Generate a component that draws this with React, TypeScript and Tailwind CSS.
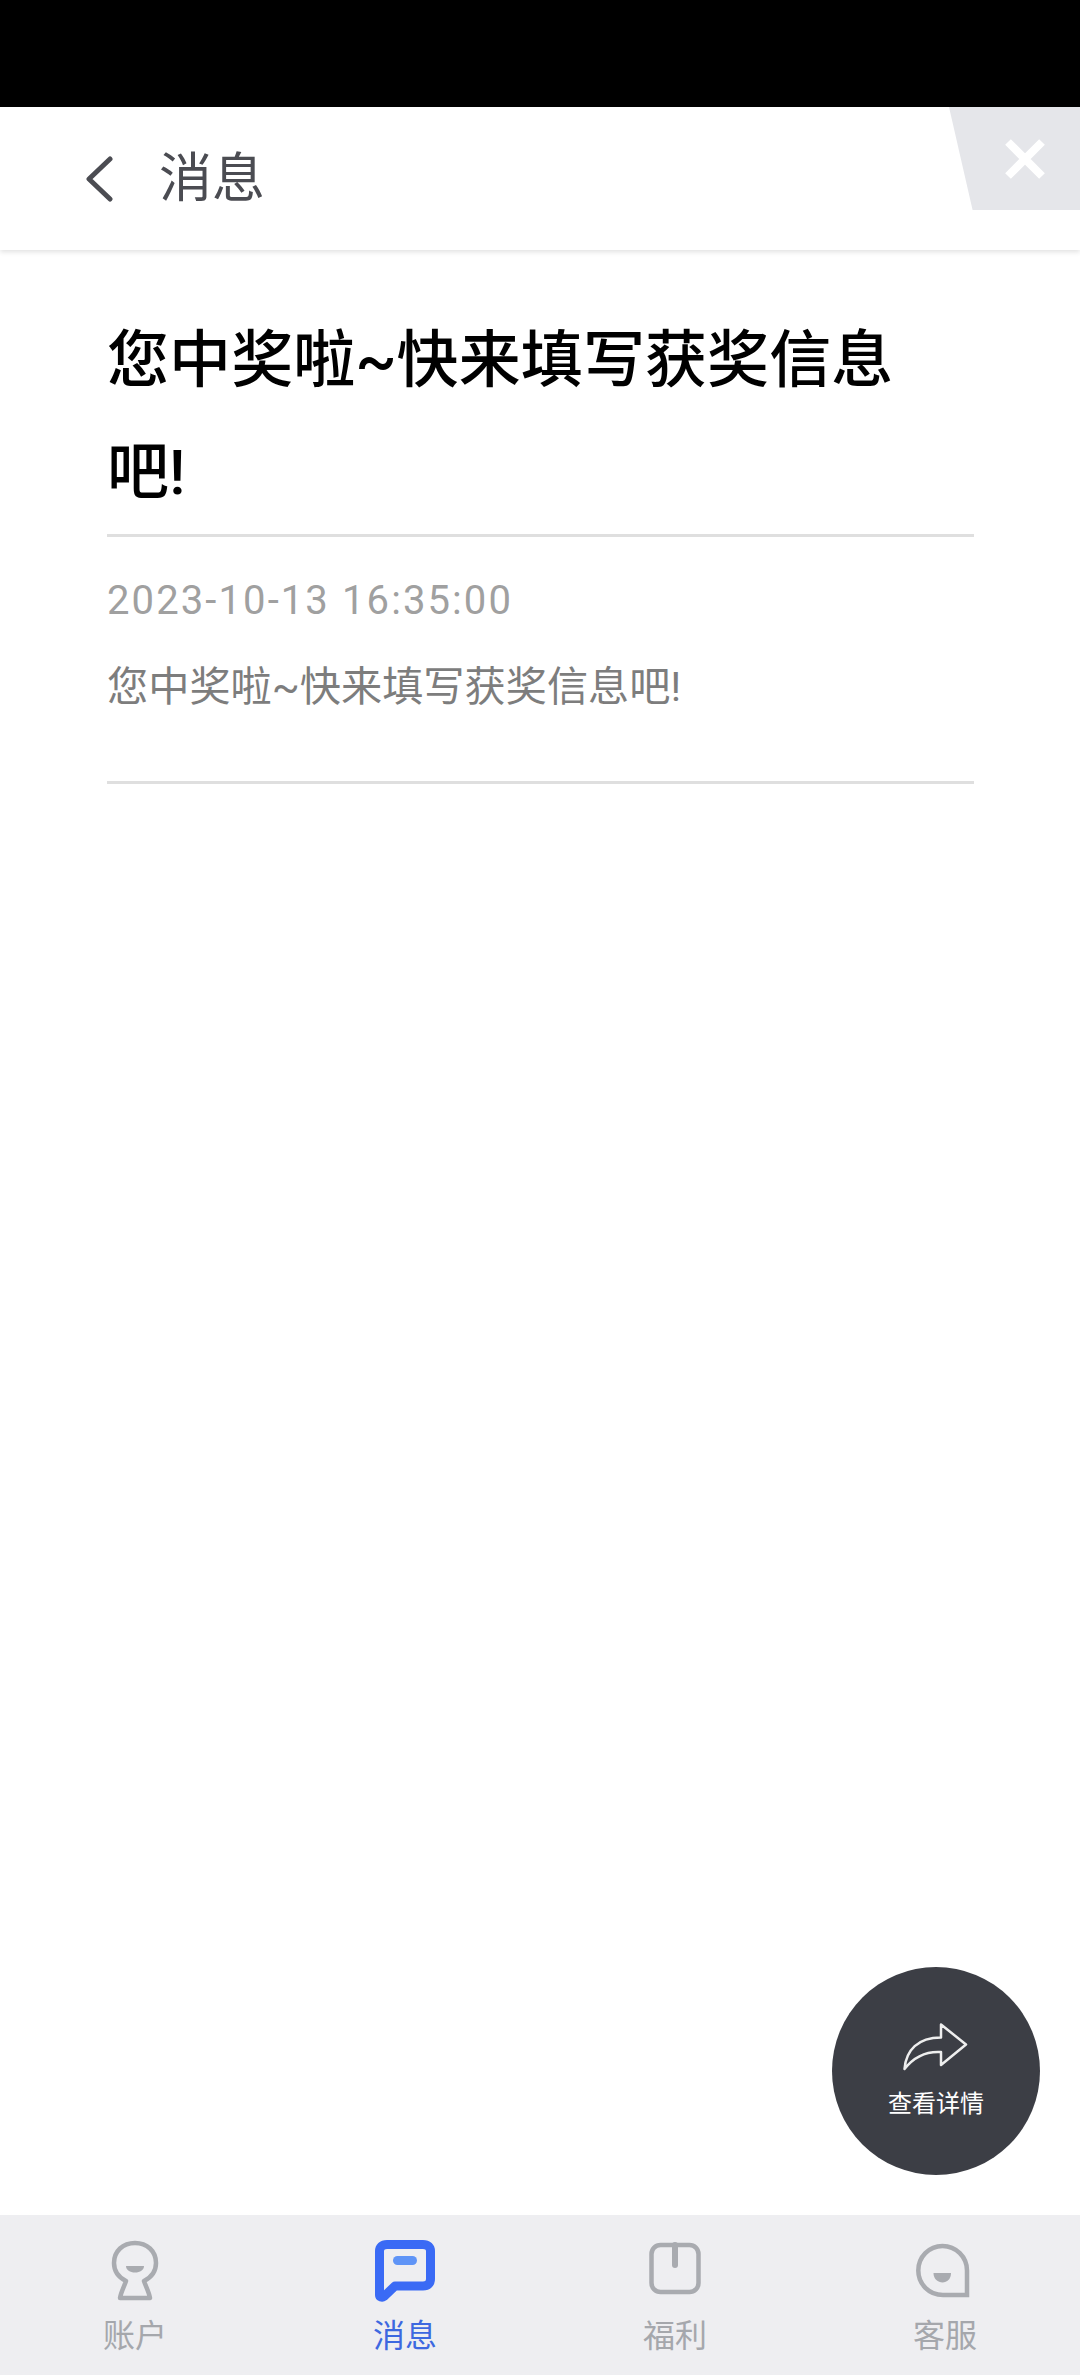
import React from "react";

const FONT = "font-['Roboto','Noto_Sans_CJK_SC',sans-serif]";

function AccountIcon() {
  return (
    <svg width="60" height="64" viewBox="0 0 60 64" fill="none" className="block">
      <path d="M21 43 C13 39 9 32 9 25 C9 13 18 5 30 5 C42 5 51 13 51 25 C51 32 47 39 39 43 C41 49 44 54 45 60 L15 60 C16 54 19 49 21 43 Z" stroke="#a9abb0" strokeWidth="4.5" strokeLinejoin="round" />
      <path d="M21 28 H39 C39 32 35 34.500 30 34.500 C25 34.500 21 32 21 28 Z" fill="#a9abb0" />
    </svg>
  );
}

function MessageIcon() {
  return (
    <svg width="60" height="64" viewBox="0 0 60 64" fill="none" className="block">
      <path d="M12 6.500 H48 C53 6.500 55.500 9 55.500 13 V41 C55.500 45 53 48 48 48 H20 L9 58.500 C7 60 4.500 59 4.500 57 V13 C4.500 9 7 6.500 12 6.500 Z" stroke="#3a6af5" strokeWidth="9" strokeLinejoin="round" />
      <rect x="18" y="18" width="24" height="9" rx="4.500" fill="#5f94f7" />
    </svg>
  );
}

function GiftIcon() {
  return (
    <svg width="60" height="64" viewBox="0 0 60 64" fill="none" className="block">
      <rect x="6.500" y="7" width="47" height="47" rx="9" stroke="#a9abb0" strokeWidth="4.500" />
      <path d="M30 7 V27" stroke="#a9abb0" strokeWidth="6" strokeLinecap="round" />
    </svg>
  );
}

function ServiceIcon() {
  return (
    <svg width="60" height="64" viewBox="0 0 60 64" fill="none" className="block">
      <path d="M52 57 H28 C14 57 3.300 46 3.300 32.500 C3.300 19 14 8 27.500 8 C41 8 52 19 52 32.500 Z" stroke="#a9abb0" strokeWidth="4.500" />
      <path d="M18.500 35 H36 C36 41 32 44.500 27.500 44.500 C23 44.500 18.500 41 18.500 35 Z" fill="#a9abb0" />
    </svg>
  );
}

const tabs = [
  { label: "账户", icon: <AccountIcon />, color: "text-[#a5a7ac]" },
  { label: "消息", icon: <MessageIcon />, color: "text-[#3d68e0]" },
  { label: "福利", icon: <GiftIcon />, color: "text-[#a5a7ac]" },
  { label: "客服", icon: <ServiceIcon />, color: "text-[#a5a7ac]" },
];

export default function App() {
  return (
    <div className={`relative flex h-[2375px] w-[1080px] flex-col overflow-hidden bg-white ${FONT}`}>
      <div className="h-[107px] shrink-0 bg-black" />

      <header className="relative flex h-[143px] shrink-0 items-center pl-[84px] shadow-[0_2px_5px_rgba(0,0,0,0.12)]">
        <svg width="30" height="46" viewBox="0 0 30 46" fill="none" className="block">
          <path d="M26 3 L5 23 L26 43" stroke="#4b4c52" strokeWidth="5" strokeLinecap="round" strokeLinejoin="round" />
        </svg>
        <h1 className="mt-[2px] ml-[45px] text-[53px] leading-none font-normal text-[#4b4c52]">消息</h1>
        <div className="absolute top-0 right-0 flex h-[103px] w-[131px] items-center justify-end bg-[#e5e6ea] pr-[34px] [clip-path:polygon(0_0,100%_0,100%_100%,18%_100%)]">
          <svg width="42" height="42" viewBox="0 0 42 42" fill="none" className="block">
            <path d="M4 4 L38 38 M38 4 L4 38" stroke="#ffffff" strokeWidth="8" />
          </svg>
        </div>
      </header>

      <main className="flex-1 pt-[55px] pr-[106px] pl-[107px]">
        <h2 className="pr-[40px] text-[62px] leading-[112px] font-medium tracking-[0.1px] text-black">您中奖啦~快来填写获奖信息吧!</h2>
        <div className="mt-[5px] h-[3px] bg-[#dfdfdf]" />
        <p className="mt-[40px] text-[40px] leading-[48px] tracking-[2.1px] text-[#a0a0a0]">2023-10-13 16:35:00</p>
        <p className="mt-[37px] text-[41.200px] leading-[50px] text-[#7d7d7d]">您中奖啦~快来填写获奖信息吧!</p>
        <div className="mt-[69px] h-[3px] bg-[#dfdfdf]" />
      </main>

      <nav className="grid h-[160px] shrink-0 grid-cols-4 bg-[#eeeef1] pt-[23px]">
        {tabs.map((t) => (
          <div key={t.label} className="flex flex-col items-center">
            {t.icon}
            <span className={`mt-[14px] text-[32px] leading-[40px] ${t.color}`}>{t.label}</span>
          </div>
        ))}
      </nav>

      <button className="absolute top-[1967px] left-[832px] flex h-[208px] w-[208px] flex-col items-center rounded-full bg-[#3c3e45] pt-[55px]">
        <svg width="66" height="50" viewBox="0 0 66 50" fill="none" className="block">
          <path d="M1.500 47 C3 28 15 15.500 38 15.500 V2.500 L63 22.500 L38 43 V30 C22 29 10 36 1.500 47 Z" stroke="#eeeeee" strokeWidth="2.500" strokeLinejoin="round" />
        </svg>
        <span className="mt-[17px] text-[24px] leading-[30px] text-white">查看详情</span>
      </button>
    </div>
  );
}
